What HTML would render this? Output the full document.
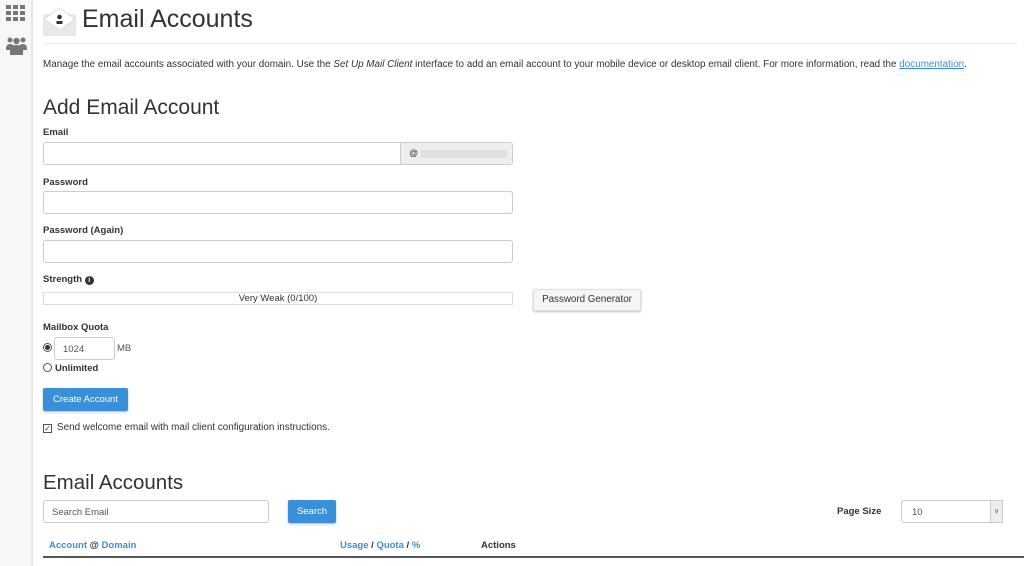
<!DOCTYPE html>
<html><head><style>
*{box-sizing:border-box;margin:0;padding:0}
body{width:1024px;height:566px;overflow:hidden;background:#fff;font-family:"Liberation Sans",sans-serif;color:#333;position:relative}
.a{position:absolute}
.side{left:0;top:0;width:33px;height:566px;background:#f7f7f7;border-right:2px solid #e6e6e6}
.lbl{font-size:9.5px;font-weight:bold;color:#333}
.inp{border:1px solid #ccc;border-radius:3px;background:#fff}
.btn{background:#3a8fd9;color:#fff;font-size:9.5px;border-radius:2px;text-align:center;box-shadow:0 1px 2px rgba(0,0,0,.3)}
a{color:#3a8fd9;text-decoration:none}
</style></head><body>
<div class="a side"></div>
<svg class="a" style="left:6px;top:5px" width="20" height="16"><g fill="#777"><rect x="0" y="0" width="5" height="4"/><rect x="7" y="0" width="5" height="4"/><rect x="14" y="0" width="5" height="4"/><rect x="0" y="6" width="5" height="4"/><rect x="7" y="6" width="5" height="4"/><rect x="14" y="6" width="5" height="4"/><rect x="0" y="12" width="5" height="4"/><rect x="7" y="12" width="5" height="4"/><rect x="14" y="12" width="5" height="4"/></g></svg>
<svg class="a" style="left:6px;top:36px" width="21" height="19"><g fill="#777"><circle cx="4" cy="4" r="2.5"/><circle cx="17" cy="4" r="2.5"/><circle cx="10.5" cy="5" r="3.2"/><path d="M0 13q0-5 4-5t4 3v3H0zM13 11q0-3 4-3t4 5v1h-8z"/><path d="M4 19v-4q0-6 6.5-6T17 15v4z"/></g></svg>
<svg class="a" style="left:43px;top:6px" width="34" height="30"><rect x="0" y="8" width="33" height="22" rx="2" fill="#e8e8e8"/><path d="M1 13L16.5 2 32 13 16.5 24z" fill="#fff" stroke="#ddd"/><circle cx="16.5" cy="11" r="2.3" fill="#333"/><path d="M13.5 18v-3h6v3z" fill="#333"/></svg>
<div class="a" style="left:82px;top:5px;font-size:25px;color:#333">Email Accounts</div>
<div class="a" style="left:43px;top:43px;width:975px;border-top:1px solid #eee"></div>
<div class="a" style="left:43px;top:59px;font-size:9.9px;white-space:nowrap">Manage the email accounts associated with your domain. Use the <i>Set Up Mail Client</i> interface to add an email account to your mobile device or desktop email client. For more information, read the <a style="text-decoration:underline">documentation</a>.</div>
<div class="a" style="left:43px;top:96px;font-size:21px">Add Email Account</div>
<div class="a lbl" style="left:43px;top:127px">Email</div>
<div class="a inp" style="left:43px;top:142px;width:470px;height:23px;border-radius:3px"></div>
<div class="a" style="left:400px;top:143px;width:112px;height:21px;background:#eee;border-left:1px solid #ccc;font-size:9px;padding:5px 0 0 8px">@<span style="display:inline-block;width:86px;height:8px;background:#e0e0e0;margin-left:3px;vertical-align:middle"></span></div>
<div class="a lbl" style="left:43px;top:177px">Password</div>
<div class="a inp" style="left:43px;top:191px;width:470px;height:23px"></div>
<div class="a lbl" style="left:43px;top:225px">Password (Again)</div>
<div class="a inp" style="left:43px;top:240px;width:470px;height:23px"></div>
<div class="a lbl" style="left:43px;top:274px">Strength <span style="display:inline-block;width:9px;height:9px;border-radius:50%;background:#333;color:#fff;font-size:7px;text-align:center;line-height:9px;vertical-align:0">i</span></div>
<div class="a" style="left:43px;top:292px;width:470px;height:13px;border:1px solid #ddd;font-size:9.5px;text-align:center;line-height:11px">Very Weak (0/100)</div>
<div class="a" style="left:533px;top:289px;width:108px;height:22px;background:#f5f5f5;border:1px solid #ddd;box-shadow:0 1px 2px rgba(0,0,0,.25);font-size:9.8px;text-align:center;line-height:20px;border-radius:2px">Password Generator</div>
<div class="a lbl" style="left:43px;top:322px">Mailbox Quota</div>
<div class="a" style="left:43px;top:343px;width:9px;height:9px;border:1px solid #555;border-radius:50%"><div style="width:5px;height:5px;background:#333;border-radius:50%;margin:1px"></div></div>
<div class="a inp" style="left:54px;top:337px;width:61px;height:23px;font-size:9.5px;color:#555;padding:6px 0 0 8px">1024</div>
<div class="a" style="left:117px;top:343px;font-size:9.5px;color:#555">MB</div>
<div class="a" style="left:43px;top:363px;width:9px;height:9px;border:1px solid #555;border-radius:50%"></div>
<div class="a lbl" style="left:55px;top:363px">Unlimited</div>
<div class="a btn" style="left:43px;top:388px;width:85px;height:23px;line-height:23px">Create Account</div>
<div class="a" style="left:43px;top:424px;width:9px;height:9px;border:1px solid #555;font-size:8px;line-height:7px;text-align:center">✓</div>
<div class="a" style="left:57px;top:422px;font-size:9.9px">Send welcome email with mail client configuration instructions.</div>
<div class="a" style="left:43px;top:471px;font-size:20.5px">Email Accounts</div>
<div class="a inp" style="left:43px;top:500px;width:226px;height:23px;font-size:9.5px;color:#555;padding:6px 0 0 8px">Search Email</div>
<div class="a btn" style="left:288px;top:500px;width:48px;height:23px;line-height:23px">Search</div>
<div class="a lbl" style="left:837px;top:506px">Page Size</div>
<div class="a inp" style="left:901px;top:500px;width:102px;height:23px;font-size:9.5px;color:#555;padding:6px 0 0 10px">10</div>
<div class="a" style="left:990px;top:500px;width:13px;height:23px;background:#eee;border:1px solid #ccc;font-size:7px;text-align:center;line-height:21px;color:#666">∨</div>
<div class="a" style="left:49px;top:540px;font-size:9.5px;font-weight:bold"><a>Account</a> @ <a>Domain</a></div>
<div class="a" style="left:340px;top:540px;font-size:9.5px;font-weight:bold"><a>Usage</a> / <a>Quota</a> / <a>%</a></div>
<div class="a lbl" style="left:481px;top:540px">Actions</div>
<div class="a" style="left:43px;top:556px;width:981px;border-top:2px solid #555"></div>
</body></html>
